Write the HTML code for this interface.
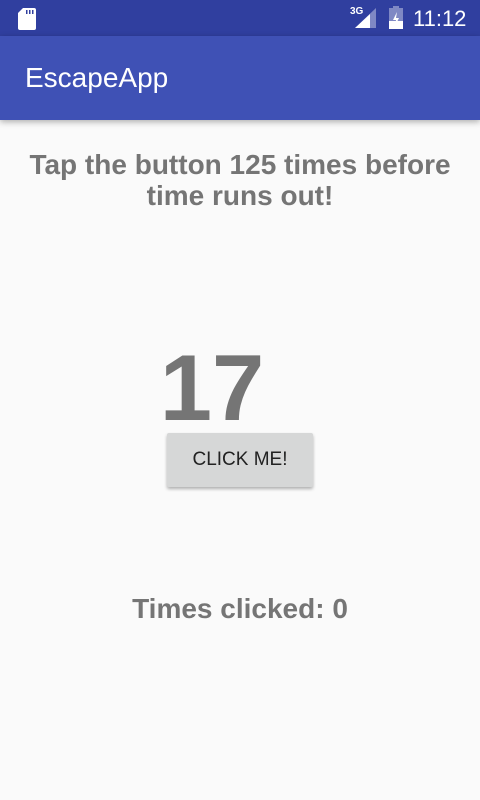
<!DOCTYPE html>
<html><head><style>
body{margin:0;width:480px;height:800px;background:#fafafa;font-family:"Liberation Sans",sans-serif;position:relative;overflow:hidden}
.sb{position:absolute;top:0;left:0;width:480px;height:36px;background:#303f9f}
.ab{position:absolute;top:36px;left:0;width:480px;height:84px;background:#3f51b5;box-shadow:0 2px 6px rgba(0,0,0,.3)}
.t{position:absolute;color:#fff}
.c{position:absolute;left:0;width:480px;text-align:center;color:#757575;font-weight:bold}
</style></head><body>
<div class="sb">
<svg style="position:absolute;left:18px;top:8px" width="18" height="22"><path d="M5 0H16a2 2 0 0 1 2 2V20a2 2 0 0 1-2 2H2a2 2 0 0 1-2-2V5z" fill="#fff"/><rect x="8" y="2" width="1.5" height="4" fill="#303f9f"/><rect x="11" y="2" width="1.5" height="4" fill="#303f9f"/><rect x="14" y="2" width="1.5" height="4" fill="#303f9f"/></svg>
<div class="t" style="left:350px;top:6px;font-size:10px;font-weight:bold">3G</div>
<svg style="position:absolute;left:355px;top:8px" width="22" height="20"><path d="M21 0V20H0z" fill="#7f88c4"/><path d="M15 6V20H0z" fill="#fff"/></svg>
<svg style="position:absolute;left:389px;top:6px" width="14" height="23"><rect x="4" y="0" width="6" height="3" fill="#7f88c4"/><rect x="0" y="2" width="14" height="21" fill="#7f88c4"/><path d="M0 15H14V23H0z" fill="#fff"/><path d="M8 6L4 14H7L6 20L10 12H7z" fill="#fff"/></svg>
<div class="t" style="left:413px;top:6px;font-size:22px">11:12</div>
</div>
<div class="ab"><div class="t" style="left:25px;top:26px;font-size:28px">EscapeApp</div></div>
<div class="c" style="top:149px;font-size:28px;line-height:31px">Tap the button 125 times before<br>time runs out!</div>
<div class="c" style="top:334px;font-size:94px;left:-28px">17</div>
<div style="position:absolute;left:167px;top:433px;width:146px;height:54px;background:#d6d7d7;border-radius:2px;box-shadow:0 2px 3px rgba(0,0,0,.3);text-align:center;line-height:54px;font-size:19px;color:#222">CLICK ME!</div>
<div class="c" style="top:593px;font-size:28px">Times clicked: 0</div>
</body></html>
